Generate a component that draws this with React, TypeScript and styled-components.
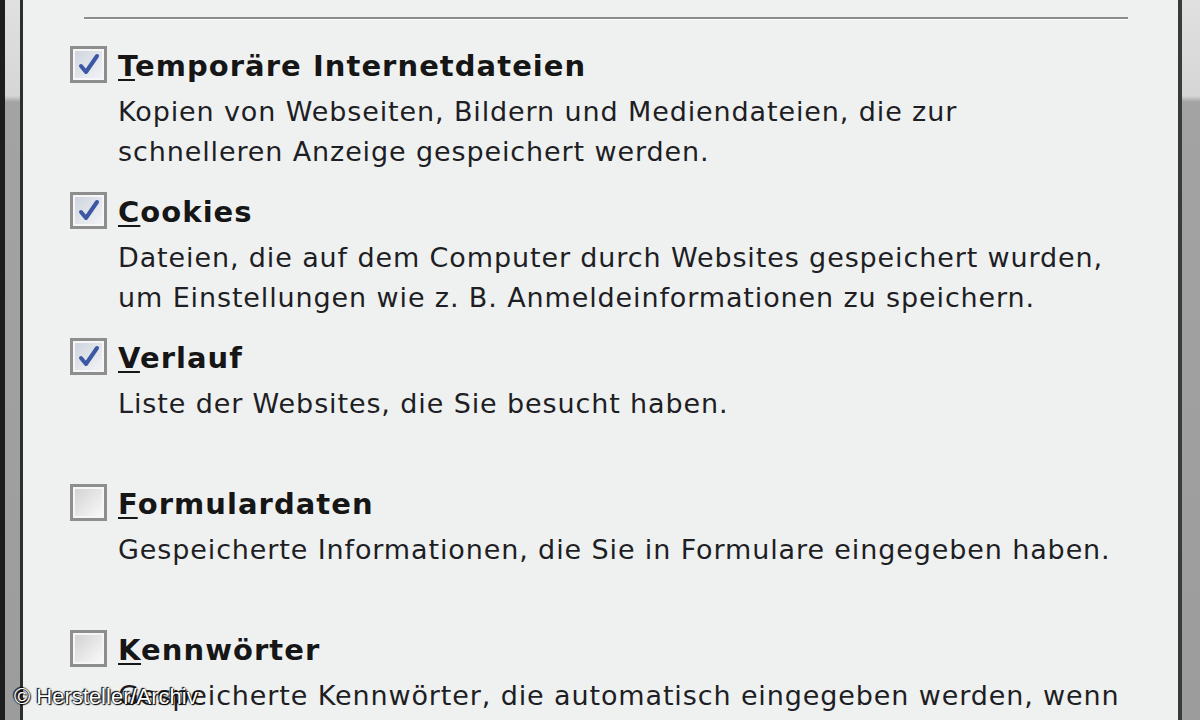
import React from "react";
import styled, { createGlobalStyle } from "styled-components";

const GlobalStyle = createGlobalStyle`
  html, body {
    margin: 0;
    padding: 0;
    overflow: hidden;
  }
  body {
    font-family: "DejaVu Sans", Verdana, sans-serif;
  }
`;

const Screen = styled.div`
  position: relative;
  display: flex;
  width: 1200px;
  height: 720px;
  overflow: hidden;
  background: #eef0f0;
`;

const Edge = styled.div<{ side: "left" | "right" }>`
  flex: 0 0 ${(p) => (p.side === "left" ? "20px" : "18px")};
  box-sizing: border-box;
  border-left: ${(p) => (p.side === "left" ? "5px solid #1d1d1d" : "none")};
  background: linear-gradient(
    to bottom,
    #e0e0e0 0px,
    #d6d6d6 96px,
    #a3a3a3 102px,
    #9c9c9c 100%
  );
`;

const Dialog = styled.div`
  flex: 1;
  box-sizing: border-box;
  border-left: 3px solid #2e2e2e;
  border-right: 4px solid #3a3a3a;
  background: #eff1f1;
  padding: 17px 0 0 47px;
  display: flex;
  flex-direction: column;
  overflow: hidden;
`;

const Separator = styled.div`
  flex-shrink: 0;
  margin-left: 14px;
  width: 1044px;
  height: 2px;
  background: #8d8d8d;
  border-bottom: 1px solid #ffffff;
  margin-bottom: 26px;
`;

const Section = styled.div`
  flex-shrink: 0;
  display: grid;
  grid-template-columns: 37px 1fr;
  column-gap: 11px;
  height: 146px;
`;

const Box = styled.div<{ checked: boolean }>`
  width: 37px;
  height: 37px;
  box-sizing: border-box;
  border: 3px solid #8e8e8e;
  background: ${(p) =>
    p.checked
      ? "linear-gradient(135deg, #cdd2db 0%, #e4e7ed 60%, #f4f5f7 100%)"
      : "linear-gradient(135deg, #d0d0d0 0%, #e8e8e8 55%, #fbfbfb 100%)"};
  box-shadow: inset 0 0 0 2px #f6f6f6;
  display: flex;
  align-items: center;
  justify-content: center;
`;

const Texts = styled.div`
  display: flex;
  flex-direction: column;
`;

const Title = styled.div`
  font-weight: bold;
  font-size: 29px;
  line-height: 40px;
  color: #161616;
  margin-bottom: 6px;
  letter-spacing: 1.05px;
  white-space: nowrap;
`;

const Key = styled.span`
  text-decoration: underline;
  text-decoration-thickness: 2px;
  text-underline-offset: 3px;
`;

const Desc = styled.div`
  font-size: 27px;
  line-height: 40px;
  color: #1e1e24;
  letter-spacing: 0.88px;
  white-space: nowrap;
`;

const Watermark = styled.div`
  position: absolute;
  left: 14px;
  bottom: 10px;
  font-family: "Liberation Sans", Arial, sans-serif;
  font-size: 22px;
  color: #ffffff;
  text-shadow: 0 0 2px #000, 1px 1px 1px #000, -1px -1px 1px #000;
`;

const Check = () => (
  <svg width="24" height="24" viewBox="0 0 24 24">
    <path
      d="M4 13 L9 19 L20 3"
      fill="none"
      stroke="#3c57a3"
      strokeWidth="4"
      strokeLinecap="round"
      strokeLinejoin="round"
    />
  </svg>
);

type Item = {
  key: string;
  rest: string;
  checked: boolean;
  lines: string[];
};

const items: Item[] = [
  {
    key: "T",
    rest: "emporäre Internetdateien",
    checked: true,
    lines: [
      "Kopien von Webseiten, Bildern und Mediendateien, die zur",
      "schnelleren Anzeige gespeichert werden.",
    ],
  },
  {
    key: "C",
    rest: "ookies",
    checked: true,
    lines: [
      "Dateien, die auf dem Computer durch Websites gespeichert wurden,",
      "um Einstellungen wie z. B. Anmeldeinformationen zu speichern.",
    ],
  },
  {
    key: "V",
    rest: "erlauf",
    checked: true,
    lines: ["Liste der Websites, die Sie besucht haben."],
  },
  {
    key: "F",
    rest: "ormulardaten",
    checked: false,
    lines: ["Gespeicherte Informationen, die Sie in Formulare eingegeben haben."],
  },
  {
    key: "K",
    rest: "ennwörter",
    checked: false,
    lines: [
      "Gespeicherte Kennwörter, die automatisch eingegeben werden, wenn",
      "Sie sich bei einer zuvor besuchten Website anmelden.",
    ],
  },
];

const App: React.FC = () => {
  return (
    <>
      <GlobalStyle />
      <Screen>
        <Edge side="left" />
        <Dialog>
          <Separator />
          {items.map((item) => (
            <Section key={item.key + item.rest}>
              <Box checked={item.checked}>{item.checked ? <Check /> : null}</Box>
              <Texts>
                <Title>
                  <Key>{item.key}</Key>
                  {item.rest}
                </Title>
                {item.lines.map((line) => (
                  <Desc key={line}>{line}</Desc>
                ))}
              </Texts>
            </Section>
          ))}
        </Dialog>
        <Edge side="right" />
        <Watermark>© Hersteller/Archiv</Watermark>
      </Screen>
    </>
  );
};

export default App;
